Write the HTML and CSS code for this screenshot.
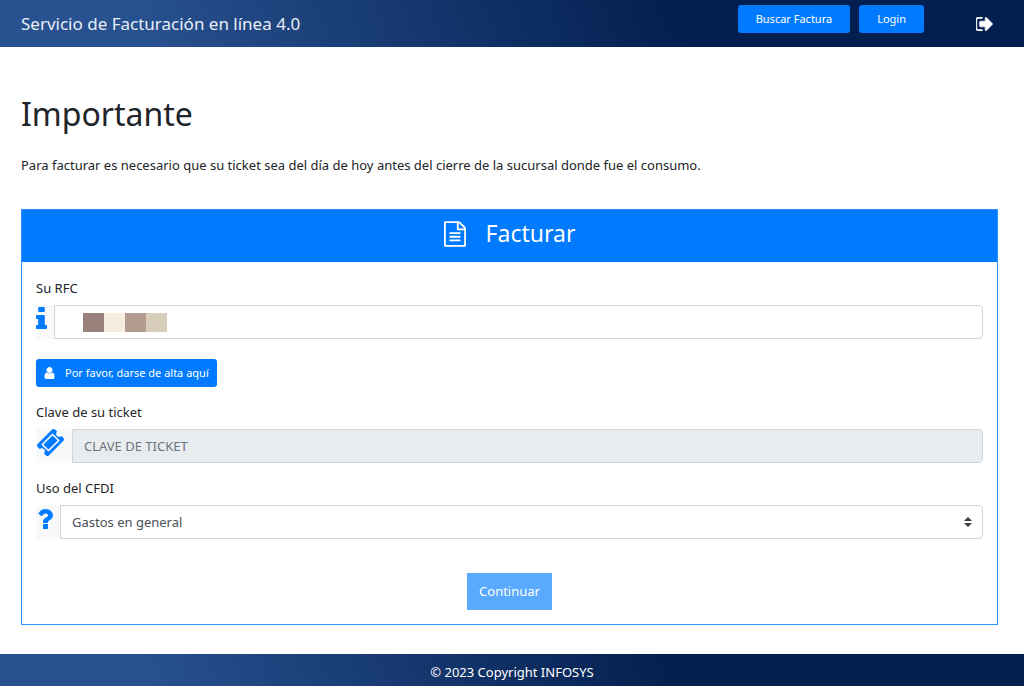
FILE: index.html
```html
<!DOCTYPE html>
<html lang="es">
<head>
<meta charset="utf-8">
<meta name="viewport" content="width=device-width, initial-scale=1">
<title>Servicio de Facturación en línea 4.0</title>
<link rel="stylesheet" href="styles.css">
</head>
<body>
<header class="navbar">
  <span class="brand">Servicio de Facturación en línea 4.0</span>
  <nav class="nav-actions">
    <button type="button" class="btn btn-nav">Buscar Factura</button>
    <button type="button" class="btn btn-nav">Login</button>
    <a href="#" class="sign-out" aria-label="Salir">
      <svg viewBox="128 256 1536 1280" width="17" height="14" fill="currentColor" stroke="currentColor" stroke-width="60" aria-hidden="true"><path d="M704 1440q0 4 1 20t.5 26.5-3 23.5-10 19.5-20.5 6.500h-320q-119 0-203.500-84.500t-84.500-203.500v-704q0-119 84.500-203.500t203.500-84.500h320q13 0 22.500 9.500t9.500 22.500q0 4 1 20t.5 26.500-3 23.500-10 19.500-20.500 6.500h-320q-66 0-113 47t-47 113v704q0 66 47 113t113 47h312l11.500 1 11.500 3 8 5.500 7 9 2 13.500zm928-544q0 26-19 45l-544 544q-19 19-45 19t-45-19-19-45v-288h-448q-26 0-45-19t-19-45v-384q0-26 19-45t45-19h448v-288q0-26 19-45t45-19 45 19l544 544q19 19 19 45z"/></svg>
    </a>
  </nav>
</header>

<main class="content">
  <h1 class="title">Importante</h1>
  <p class="notice">Para facturar es necesario que su ticket sea del día de hoy antes del cierre de la sucursal donde fue el consumo.</p>

  <section class="card">
    <h2 class="card-header">
      <svg viewBox="128 0 1536 1792" width="22" height="26" fill="currentColor" aria-hidden="true"><path d="M1596 380q28 28 48 76t20 88v1152q0 40-28 68t-68 28h-1344q-40 0-68-28t-28-68v-1600q0-40 28-68t68-28h896q40 0 88 20t76 48zm-444-244v376h376q-10-29-22-41l-313-313q-12-12-41-22zm384 1528v-1024h-416q-40 0-68-28t-28-68v-416h-768v1536h1280zm-1024-864q0-14 9-23t23-9h704q14 0 23 9t9 23v64q0 14-9 23t-23 9h-704q-14 0-23-9t-9-23v-64zm736 224q14 0 23 9t9 23v64q0 14-9 23t-23 9h-704q-14 0-23-9t-9-23v-64q0-14 9-23t23-9h704zm0 256q14 0 23 9t9 23v64q0 14-9 23t-23 9h-704q-14 0-23-9t-9-23v-64q0-14 9-23t23-9h704z"/></svg>
      <span>Facturar</span>
    </h2>
    <form class="card-body">
      <label class="label" for="rfc">Su RFC</label>
      <div class="input-group">
        <span class="addon addon-info">
          <svg viewBox="576 128 640 1408" width="11" height="22" preserveAspectRatio="none" fill="currentColor" aria-hidden="true"><path d="M1216 1344v128q0 26-19 45t-45 19h-512q-26 0-45-19t-19-45v-128q0-26 19-45t45-19h64v-384h-64q-26 0-45-19t-19-45v-128q0-26 19-45t45-19h384q26 0 45 19t19 45v576h64q26 0 45 19t19 45zm-128-1152v192q0 26-19 45t-45 19h-256q-26 0-45-19t-19-45v-192q0-26 19-45t45-19h256q26 0 45 19t19 45z"/></svg>
        </span>
        <div class="masked">
          <input class="control" id="rfc" type="text">
          <span class="mask" aria-hidden="true"><i class="block block-brown"></i><i class="block block-cream"></i><i class="block block-rose"></i><i class="block block-sand"></i></span>
        </div>
      </div>

      <button type="button" class="btn btn-register">
        <svg viewBox="256 128 1280 1536" width="11" height="12" fill="currentColor" aria-hidden="true"><path d="M1536 1399q0 109-62.500 187t-150.500 78h-854q-88 0-150.500-78t-62.500-187q0-85 8.500-160.500t31.500-152 58.500-131 94-89 134.500-34.500q131 128 313 128t313-128q76 0 134.500 34.500t94 89 58.500 131 31.500 152 8.500 160.500zm-256-887q0 159-112.500 271.500t-271.500 112.500-271.500-112.500-112.500-271.500 112.500-271.500 271.500-112.500 271.500 112.500 112.500 271.500z"/></svg>
        <span>Por favor, darse de alta aquí</span>
      </button>

      <label class="label" for="clave">Clave de su ticket</label>
      <div class="input-group group-gap">
        <span class="addon addon-ticket">
          <svg viewBox="53 53 1686 1686" width="27" height="27" fill="currentColor" aria-hidden="true"><path d="M1024 452l316 316-572 572-316-316zm-211 979l618-618q19-19 19-45t-19-45l-362-362q-18-18-45-18t-45 18l-618 618q-19 19-19 45t19 45l362 362q18 18 45 18t45-18zm889-637l-907 908q-37 37-90.500 37t-90.500-37l-126-126q56-56 56-136t-56-136-136-56-136 56l-125-126q-37-37-37-90.500t37-90.500l907-906q37-37 90.500-37t90.500 37l125 125q-56 56-56 136t56 136 136 56 136-56l126 125q37 37 37 90.500t-37 90.500z"/></svg>
        </span>
        <input class="control" id="clave" type="text" placeholder="CLAVE DE TICKET" disabled>
      </div>

      <label class="label" for="uso">Uso del CFDI</label>
      <div class="input-group">
        <span class="addon addon-question">
          <svg viewBox="384 256 1024 1280" width="16" height="20" fill="currentColor" aria-hidden="true"><path d="M1088 1256v240q0 16-12 28t-28 12h-240q-16 0-28-12t-12-28v-240q0-16 12-28t28-12h240q16 0 28 12t12 28zm316-600q0 54-15.500 101t-35 76.500-55 59.500-57.500 43.500-61 35.500q-41 23-68.500 65t-27.500 67q0 17-12 32.500t-28 15.500h-240q-15 0-25.500-18.500t-10.500-37.500v-45q0-83 65-156.500t143-108.500q59-27 84-56t25-76q0-42-46.500-74t-107.500-32q-65 0-108 29-35 25-107 115-13 16-31 16-12 0-25-8l-164-125q-13-10-15.500-25t5.500-28q160-266 464-266 80 0 161 31t146 83 106 127.500 41 158.500z"/></svg>
        </span>
        <div class="select-wrap">
          <select class="control" id="uso"><option>Gastos en general</option></select>
          <svg class="caret" viewBox="0 0 8 10" width="8" height="10" fill="#343a40" aria-hidden="true"><path d="M4 0 8 4H0zM4 10 0 6h8z"/></svg>
        </div>
      </div>

      <button type="submit" class="btn-continue" disabled>Continuar</button>
    </form>
  </section>
</main>

<footer class="footer">© 2023 Copyright INFOSYS</footer>
</body>
</html>
```
FILE: styles.css
```css
*, *::before, *::after { box-sizing: border-box; }

body {
  margin: 0;
  background: #fff;
  color: #212529;
  font: 13px/22px "Noto Sans", "Open Sans", sans-serif;
}

button, input, select { font: inherit; }

.navbar, .footer {
  background: linear-gradient(70deg, #28518f 14%, #031f4f 66%);
  color: #fff;
}

.navbar {
  display: flex;
  justify-content: space-between;
  padding: 5px 31px 5px 21px;
  min-height: 47px;
}

.brand {
  align-self: center;
  font-size: 17px;
  color: #e9eef6;
}

.nav-actions { display: flex; gap: 9px; }

.btn {
  border: 0;
  border-radius: 3px;
  background: #007bff;
  color: #fff;
  font-size: 11px;
  line-height: 20px;
  height: 28px;
}

.btn-nav { padding: 4px 18px; }

.sign-out {
  display: flex;
  align-items: center;
  align-self: center;
  margin-left: 43px;
  color: #fff;
}

.content { padding: 45px 26px 29px 21px; }

.title {
  margin: 0 0 18px;
  font-size: 32px;
  line-height: 44px;
  font-weight: 400;
}

.notice { margin: 0 0 33px; }

.card { border: 1px solid #2f93ff; }

.card-header {
  display: flex;
  align-items: center;
  justify-content: center;
  gap: 20px;
  margin: 0;
  padding: 8px 0 13px;
  background: #007bff;
  color: #fff;
  font-size: 23px;
  line-height: 31px;
  font-weight: 400;
}

.card-body {
  display: flex;
  flex-direction: column;
  align-items: flex-start;
  padding: 15px 14px 14px;
}

.label { margin-bottom: 6px; }

.input-group {
  display: flex;
  align-self: stretch;
  height: 34px;
}

.group-gap { margin-bottom: 14px; }

.addon {
  flex: none;
  background: #f8f9fa;
  color: #007bff;
}

.addon svg { display: block; }
.addon-info { width: 18px; padding-top: 2px; }
.addon-ticket { width: 36px; padding: 0 1px; }
.addon-question { width: 24px; padding: 4px 1px; }

.masked, .select-wrap { position: relative; flex: 1; }

.control {
  display: block;
  width: 100%;
  height: 100%;
  min-width: 0;
  padding: 0 11px;
  border: 1px solid #ced4da;
  border-radius: 0 4px 4px 0;
  background: #fff;
  color: #495057;
  appearance: none;
}

.control:disabled { background: #e9ecef; }
.control::placeholder { color: #6c757d; opacity: 1; }

.mask {
  position: absolute;
  top: 8px;
  left: 29px;
  display: flex;
}

.block { width: 21px; height: 19px; }
.block-brown { background: #98817b; }
.block-cream { background: #f5ece0; }
.block-rose { background: #b39b90; }
.block-sand { background: #d8cdbb; }

.caret {
  position: absolute;
  top: 12px;
  right: 11px;
  pointer-events: none;
}

.btn-register {
  display: flex;
  align-items: center;
  gap: 10px;
  margin: 20px 0 14px;
  padding: 4px 8px;
}

.btn-continue {
  align-self: center;
  margin-top: 34px;
  padding: 7px 12px;
  border: 0;
  background: #59a9ff;
  color: #fff;
  line-height: 23px;
}

.footer {
  padding: 7px 0 3px;
  text-align: center;
}
```
